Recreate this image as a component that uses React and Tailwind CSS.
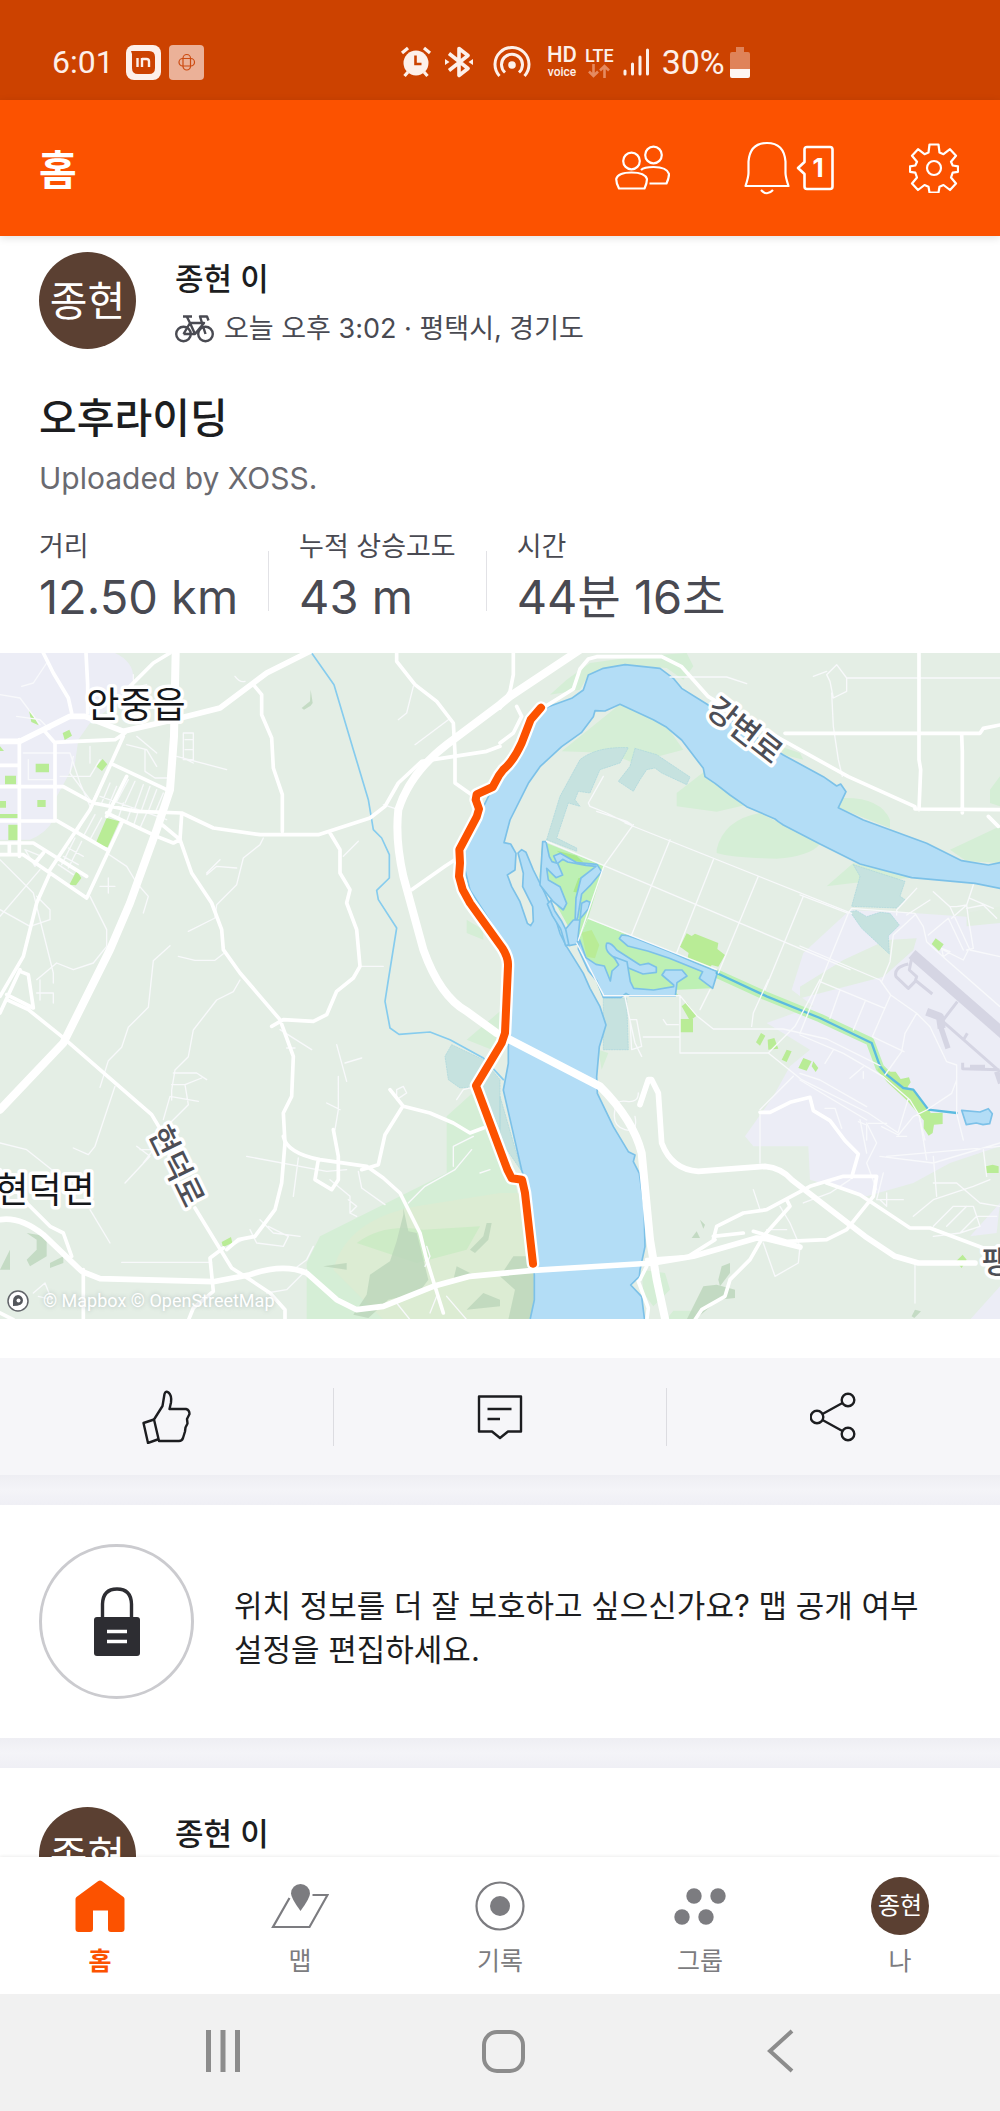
// ============================================================
// Feed — pantalla de inicio con actividad, mapa y navegación
// ============================================================

const FONT = 'font-[Inter,"Noto_Sans_CJK_KR",sans-serif]';

/* ---------- Barra de estado ---------- */

function StatusBar() {
  return (
    <div className="flex h-[100px] shrink-0 items-center bg-[#cc4200] pt-[24px] font-[Roboto,sans-serif] text-[#fdf0ea]">
      <div className="flex w-2/5 items-center pl-[52px]">
        <span className="text-[32px] leading-[36px]">6:01</span>
        <svg className="ml-[12px] size-[35px]" viewBox="0 0 35 35" fill="none" aria-hidden="true">
          <rect width="35" height="35" rx="8" fill="#fdf0ea" />
          <path d="M5 6h18q6 0 6 6v11q0 6-6 6H12q-6 0-6-6V9z" fill="#cc4200" />
          <path d="M11.500 13v9M16 22v-9M16 14h4.500q2.500 0 2.500 2.500V22" stroke="#fdf0ea" strokeWidth="2.400" />
        </svg>
        <svg className="ml-[8px] size-[35px]" viewBox="0 0 35 35" fill="none" aria-hidden="true">
          <rect width="35" height="35" rx="4" fill="#ebb198" />
          <rect x="14" y="9.500" width="7.500" height="15.500" rx="3.700" stroke="#cc4a10" strokeWidth="1.200" />
          <rect x="10" y="13.500" width="15.500" height="7.500" rx="3.700" stroke="#cc4a10" strokeWidth="1.200" />
        </svg>
      </div>
      <div className="flex items-center">
        {/* Alarma */}
        <svg className="h-[32px] w-[32px]" viewBox="0 0 32 32" aria-hidden="true">
          <circle cx="16" cy="17" r="12.500" fill="currentColor" />
          <path d="M2 7l6-5M30 7l-6-5M8 26l-3.500 4M24 26l3.500 4" stroke="currentColor" strokeWidth="3.200" />
          <path d="M15.500 9.500v8.500h6" stroke="#cc4200" strokeWidth="2.600" fill="none" />
        </svg>
        {/* Bluetooth */}
        <svg className="ml-[13px] h-[32px] w-[28px]" viewBox="0 0 28 32" fill="none" stroke="currentColor" strokeWidth="3.600" aria-hidden="true">
          <path d="M4 7.500L23 22.500 14 29.500V2.500L23 9.500 4 24.500" strokeLinejoin="round" />
          <path d="M0 13l4.500 3L0 19zM28 13l-4.500 3 4.500 3z" fill="currentColor" stroke="none" />
        </svg>
        {/* Zona wifi */}
        <svg className="ml-[20px] h-[32px] w-[38px]" viewBox="0 0 38 32" fill="none" stroke="currentColor" strokeWidth="3" aria-hidden="true">
          <path d="M6.500 30A17 17 0 1 1 31.500 30" />
          <path d="M12 26.500A10.500 10.500 0 1 1 26 26.500" />
          <circle cx="19" cy="19" r="3.800" fill="currentColor" stroke="none" />
        </svg>
        <span className="ml-[16px] flex flex-col items-center">
          <span className="text-[22px] leading-[20px] font-medium">HD</span>
          <span className="text-[12px] leading-[14px] font-medium">voice</span>
        </span>
        <span className="ml-[8px] flex flex-col items-center">
          <span className="text-[18px] leading-[17px] font-medium">LTE</span>
          <svg className="h-[14px] w-[22px]" viewBox="0 0 22 14" fill="none" stroke="#e58a60" strokeWidth="2.600" aria-hidden="true">
            <path d="M5.500 0v12M1 7.500l4.500 4.500L10 7.500M16.500 14V2M12 6.500L16.500 2 21 6.500" />
          </svg>
        </span>
        <svg className="ml-[9px] h-[28px] w-[27px]" viewBox="0 0 27 28" stroke="currentColor" strokeWidth="3" strokeLinecap="round" aria-hidden="true">
          <path d="M2 23v3M9.500 16v10M17 9v17M24.500 2v24" />
        </svg>
        <span className="ml-[12px] text-[34px] leading-[36px]">30%</span>
        <svg className="ml-[5px] h-[31px] w-[20px]" viewBox="0 0 20 31" aria-hidden="true">
          <path d="M6 0h8v5h4q2 0 2 2v15H0V7q0-2 2-2h4z" fill="#df8359" />
          <path d="M0 22h20v7q0 2-2 2H2q-2 0-2-2z" fill="#fdf6f2" />
        </svg>
      </div>
    </div>
  );
}

/* ---------- Cabecera ---------- */

function Header() {
  return (
    <header className="relative z-10 flex h-[136px] shrink-0 items-center bg-[#fc5200] pr-[41px] pl-[39px] text-white shadow-[0_2px_8px_rgba(0,0,0,0.12)]">
      <h1 className="pt-[3px] text-[41px] leading-[48px] font-bold">홈</h1>
      <button type="button" aria-label="친구" className="ml-auto">
        <svg className="h-[52px] w-[55px]" viewBox="0 0 55 52" fill="none" stroke="currentColor" strokeWidth="2.200" strokeLinejoin="round">
          <circle cx="16.500" cy="19" r="8.300" />
          <circle cx="38.500" cy="13" r="8.300" />
          <path d="M4 46.500Q1.200 41 1.200 37 3 30.500 16.500 30.500T32 37q0 4-2.500 9.500z" />
          <path d="M26 28q3-3 12.500-3Q52 25 54 32q0 4-2.500 9.500H34.500" />
        </svg>
      </button>
      <button type="button" aria-label="알림 1" className="ml-[74px] flex items-center gap-[6px]">
        <svg className="h-[54px] w-[46px]" viewBox="0 0 46 54" fill="none" stroke="currentColor" strokeWidth="2.200" strokeLinejoin="round">
          <path d="M4.500 20.500Q6 2 23 2t18.500 18.500V32q0 4 3 13H1.500q3-9 3-13z" />
          <path d="M17 49q6 6.500 12 0" />
        </svg>
        <span className="relative flex h-[46px] w-[38px] items-center justify-center pl-[6px]">
          <svg className="absolute inset-0 size-full" viewBox="0 0 38 46" fill="none" stroke="currentColor" strokeWidth="2.600" strokeLinejoin="round" aria-hidden="true">
            <path d="M11 2h23q2.500 0 2.500 2.500v37q0 2.500-2.500 2.500H11q-2.500 0-2.500-2.500V29L2 23l6.500-6V4.500Q8.500 2 11 2z" />
          </svg>
          <span className="relative text-[26px] leading-[32px] font-bold">1</span>
        </span>
      </button>
      <button type="button" aria-label="설정" className="ml-[75px]">
        <svg className="size-[50px]" viewBox="0 0 50 50" fill="none" stroke="currentColor" strokeWidth="2.200" strokeLinejoin="round">
          <path d="M20.500 1.500h9l1 8 4 1.700 6.500-5 6 6.500-5 6 1.700 3.800 5.300.8v5.500l-5.300.9-1.700 4.800 5 6-6 6.500-6.500-5-4 1.700-1 5.800h-9l-1-5.800-4-1.700-6.500 5-6-6.500 5-6-1.700-4.800-5.300-.9v-5.500l5.300-.8L8 18.700l-5-6 6-6.500 6.500 5 4-1.700z" />
          <circle cx="25" cy="25" r="7" />
        </svg>
      </button>
    </header>
  );
}

/* ---------- Mapa de la ruta ---------- */

const RIVER =
  'M1645 161L1715 136 1750 111 1765 66 1810 46 1875 35 1980 46 2020 76 2045 106 2120 153 2350 306 2470 371 2510 399 2522 393 2538 416 2515 464 2590 501 2780 571 2885 623 2965 636 3020 625V710L2925 691 2735 674 2580 633 2460 573 2350 516 2335 506 2325 498 2240 461 2190 426 2145 391 2115 371 2110 346 2045 261 2000 223 1960 200 1860 154 1815 174 1785 173 1780 191 1745 238 1685 281 1620 341 1585 391 1530 501 1512 569 1532 573 1548 601 1545 651 1522 666 1535 701 1560 746 1582 811 1592 818 1600 805 1598 761 1568 701 1570 661 1554 600 1565 590 1578 598 1600 651 1635 721 1665 791 1680 841 1700 881 1750 961 1770 1006 1800 1061 1818 1116 1798 1181 1790 1271 1792 1321 1840 1421 1885 1496 1905 1506 1900 1526 1918 1561 1932 1661 1935 1781 1920 1851 1918 1871 1892 1896 1925 1931 1935 2010H1588L1603 1941 1603 1866 1575 1581 1565 1551 1510 1311 1525 1231V1161L1530 981 1520 911 1500 851 1410 711 1385 611 1440 481 1460 441 1500 361 1545 291 1600 201z';

const ROUTE =
  'M1623 164L1592 200 1565 270Q1540 325 1510 350L1497 367 1478 402 1430 424 1427 440 1437 468 1430 492 1378 590 1380 630 1377 670 1388 710 1410 750 1507 885Q1526 915 1524 940L1515 1140 1505 1170 1428 1298 1522 1550 1535 1576 1566 1580 1575 1620 1592 1770 1599 1832';

function RouteMap() {
  return (
    <div className="relative">
      <svg className="block w-full" viewBox="0 0 1000 666" aria-label="오후라이딩 지도">
        <rect width="1000" height="666" fill="#e4eee5" />
        <g transform="scale(0.33333)" fill="none" strokeLinejoin="round" strokeLinecap="round">
          {/* Zonas urbanas */}
          <g fill="#ecedf6">
            <path d="M0 0H345Q400 25 400 75 385 130 330 165L270 210 235 260 225 330 165 440 160 500Q140 540 90 560H0z" />
            <path d="M2550 771L2750 781 2900 791 3000 765V1480L2850 1530 2740 1590 2600 1630 2430 1580 2425 1480H2260L2235 1450 2320 1330 2370 1240 2430 1190 2300 1110 2440 1060 2375 1010 2410 900z" />
            <path d="M3000 1650L2910 1750 2990 1740zM3000 1900L2910 2000h90z" />
          </g>
          {/* Vegetación */}
          <g fill="#d5eed6">
            <path d="M1650 125L1700 80 1770 30 1900 12 1985 5 2060 0 2080 40 2050 80 2000 45 1870 35 1765 66 1740 110z" />
            <path d="M1685 295L1860 154 2000 220 2050 290 1900 330 1830 300z" />
            <path d="M2030 420L2120 350 2240 455 2150 476 2030 460z" />
            <path d="M2150 590Q2170 500 2280 480L2460 573Q2430 610 2330 617 2200 615 2150 600z" />
            <path d="M2480 700L2560 630 2735 674 2560 690zM2520 435Q2640 430 2670 500V525L2515 464zM2340 280l60 20 10 20-60-15zM2850 590L3000 520V630L2900 625zM3000 370l-30 40v40l30 10z" />
            <path d="M1400 800l50 30v30l-50-20zM1500 1075L1400 1160 1500 1200zM1340 1390L1440 1300 1540 1560 1600 1850V2000H920V1830L960 1750 1340 1560V1480z" />
            <path d="M1925 1850l70 10 15 50-50 50-30-40zM2000 1998l20-25h60l15 25zM1795 1190l30 10-20 50z" />
          </g>
          <path d="M2400 1001L2530 921 2660 861 2750 856 2740 891 2650 971 2460 1021 2400 1036zM2900 780l100-20v50l-100 10z" fill="#e2eee2" />
          <path d="M1000 1850Q1040 1700 1250 1660L1500 1620 1570 1620 1600 1850 1590 2000H1150z" fill="#dcecd3" />
          <path d="M1070 1770Q1150 1710 1270 1730L1440 1720 1400 1790 1250 1830z" fill="#cdebc6" />

          {/* Relieve */}
          <g fill="#bcd6bb" opacity="0.8">
            <path d="M80 1740l60 10v60l-50 30-10-20 30-30v-30zM150 1830l40-20v20l-40 15zM0 1850l30-60v60z" />
            <path d="M1210 1665l15 70 25 5 15 60 20 80-30 40-90 20-60 55-45-10 40-60 10-60 60-40 20-60 20-80z" />
            <path d="M970 1840l70-10v20zM1370 1840l60 30-70 10zM1460 1710h15l-10 50-40 40-15-10 40-40zM1400 1970l50-50 50 20v20z" />
            <path d="M1540 1810h40l45 60v90l-40 40h-60l20-90-45-40z" />
            <path d="M2165 1840l25-10v30l-30 40-5-20zM2110 1900l40-5 55 15v25l-50 5-70 60h-25zM2075 1755l15-20 10 20zM2100 1700l15 15-5 12zM2735 1990l10-20 18 5-20 20zM905 165l25-20 2-35 6 40-6 8-20 12z" />
          </g>

          {/* Humedales */}
          <g fill="#c6e2df" stroke="#a9d6dc" strokeWidth="2" strokeDasharray="4 4">
            <path d="M1640 560L1680 430 1740 320Q1790 280 1885 284L1860 330 1800 350 1770 420 1735 415 1725 440 1740 460 1705 450 1670 555 1730 585 1730 595z" />
            <path d="M1905 286L1970 305 2070 372 2060 395 1985 360 1965 345 1940 350 1920 380 1900 415 1855 385 1890 340z" />
            <path d="M2560 635L2715 685 2700 730 2715 740 2690 765 2555 760 2580 670zM2550 776L2570 773 2600 791 2640 778 2670 781 2698 816 2665 849 2668 903 2585 826z" />
            <path d="M1355 1175L1450 1220 1500 1280V1430L1440 1300 1380 1305 1345 1280 1335 1210zM1500 1330l65 225-65-95z" />
            <path d="M1810 1035h70l5 155h-75z" />
          </g>

          {/* Canal */}
          <path d="M2150 962L2300 1030 2460 1095 2610 1165 2640 1245 2770 1370" stroke="#bdf0b4" strokeWidth="26" />

          <path d={RIVER} fill="#b3ddf6" stroke="#7cc1e8" strokeWidth="5" />

          {/* Parque de la laguna */}
          <g transform="translate(1590 531)">
            <path d="M40 35L222 108 175 262 140 335 60 190 28 140z" fill="#bdf0b4" />
            <path d="M80 62l60 15 20 20-40-5zM165 140l-15 50-20-5 15-40zM35 50l5 80-8 0z" fill="#a9e98c" />
            <path d="M175 265L300 318 565 425 545 475 430 480 445 495H215L145 330z" fill="#bdf0b4" />
            <path d="M155 308L185 300 208 345 195 385 170 380z" fill="#b9ec96" />
            <path d="M450 350l20-40 15 8 10-7 70 28-3 18 23 18-20 35-20-5-5 10-68-28 4-18z" fill="#b9ec96" />
            <g fill="#b3ddf6" stroke="#7cc1e8" strokeWidth="5">
              <path d="M38 35h10l10 45 8 15 15 5-10-22 20-8 50 28 60 5 14 22-35 42-25 25-12 70-8 20-10 60-18 5-15-50-25-40-15-35 10-10 12 30 20 30 20 40 20-8 4-100 15-60 45-35-30-3-55-10-15-8-15 12 15 35-20 8-28-28 5 35 35 20 20 50-10 20-30-25-40-50z" />
              <path d="M130 270h20l5-50 15-8 10 5-5 20-25 30-8 75-25 5-10-50zM275 315l20 2 28 10 100 40 70 30 70 28-15 50-40-30 10-20-100-40-65-22-60-15-25-22z" />
              <path d="M230 340q12-5 30 20l70 45 25-5 24 12v15l-40 5-60-25-40-35q-15-15-9-32z" />
              <path d="M148 328l20 55 30 20 25 5 18 45 5-30 20-18-15-25 40 15 10 60 10 20 60 5 60-10v-5l-35-30 10-15h50l15 18-30 20-5 40H300l-12-8-15 12h-53l-20-50-25-30-30-65z" />
            </g>
            <path d="M100 108l15 22" stroke="#bdf0b4" strokeWidth="8" />
          </g>

          {/* Parques pequeños */}
          <g fill="#b9ec96">
            <path d="M86 167q18 25 30 50l-22-10zM188 240l20-10 8 18-22 13zM107 332h40v26h-40zM15 368h33v26H15zM112 441h25v21h-25zM0 444h18v20H0zM0 483h55v12H0zM25 515h30v46H25zM288 340l20-22 14 16-16 20zM320 495l38 10-35 78-38-8zM208 695l22-42 14 22-16 22zM0 280l12 14H0zM665 1767l28-15 4 18-28 12z" />
            <path d="M2045 1060l15-12 30 40-20 15zM2041 1098h38v40h-38zM2268 1168l15-28 13 8-16 30zM2303 1160l20-5 12 32-30 3zM2345 1220l15-30 15 5-15 32zM2395 1245l15-30 25 10-15 28zM2435 1240l5-15 15 20-8 12zM2958 1540l20-5 18 5v20h-38zM2868 1825l20-20 12 15-15 25z" />
            <g transform="translate(2400 681)">
              <path d="M395 192l12-17 24 18-14 20zM232 570l10-15 25 20 20 0 15 22 25-5 5 15-10 15 20 10 50 65-20 25-50-60-60-55zM372 700l56-2v34l-26 2-4 25-12 8-15-22z" />
            </g>
          </g>

          {/* Agua menor */}
          <path d="M2150 960L2300 1030 2460 1095 2615 1170 2640 1240 2660 1265 2710 1305 2740 1310 2785 1370 2870 1380" stroke="#5bbbe0" strokeWidth="7" />
          <path d="M2885 1372l55 5 25-10 12 15-8 30-20 3-20-5-30 5z" fill="#b3ddf6" stroke="#7cc1e8" strokeWidth="5" />
          <path d="M935 0L1002 95 1060 290 1105 440 1120 530 1145 555 1168 605V675L1130 712 1135 740 1190 825 1165 981 1155 1045 1170 1125 1197 1144 1290 1137 1350 1160 1450 1215 1510 1280" stroke="#86ccee" strokeWidth="5" />

          {/* Aeropuerto */}
          <g transform="translate(2400 681)" stroke="#d5d5e3" strokeLinecap="butt">
            <path d="M336 222L620 470" strokeWidth="32" />
            <path d="M325 252Q280 262 288 290L325 325 345 305 350 290 328 270 335 235M345 300l52 42M472 365l-50 65M412 410L600 575M490 480l12-20M488 548v18l110 3" strokeWidth="9" />
            <path d="M380 395l40 15 5 35" strokeWidth="24" />
            <path d="M422 440l22 65M510 562h45M590 575l12 35" strokeWidth="16" />
          </g>

          {/* Calles menores */}
          <g stroke="#f8f9fb" strokeWidth="4">
            <path d="M65 100l35-10 40-60M0 125l60 10 60 80M50 190l70 10 30 30M70 300h140l30 90 30 70M85 320v60h80M180 370h90l30-50M220 310l-10 50 60 80M270 280v50M380 110l60-15M400 65v40M380 275l60 15 30 50M410 250l60 50M435 290v65l30 20h40M530 310l150 40M550 240h30v80h-30zM555 260h22M555 290h22M560 320l20 10M705 70q15 20 30 15M1240 100l-20 80-25 20M1345 200l-100 75M1150 455l45 15" />
            <path d="M310 380l-30 60M330 390l-25 60M350 400l-25 60M385 380l-35 65M405 385l-30 65M430 395l-25 70M450 400l-25 70M470 410l-25 65M490 420l-25 60M300 430l200 70M345 440l-15 45M370 450l-15 45M395 465l-15 40M415 475l-15 45M440 480l-20 45M265 475l-35 65M285 485l-35 65M305 495l-35 65M225 555l-40 80M245 565l-40 80M175 635l45 30M190 610l45 25M205 585l45 25" />
            <path d="M75 590l50 20-20 30zM120 650L0 790M0 620l100 100 60 240v30M110 730l40 40v30l-60 20-90-50M320 600l60 40 30 50 35 40-15 50M270 730l50 100v50L280 930l-60 20-50-20-60 50M300 700l45 0M325 675v45M790 555l-10 20-50 40-20 80-60 60-5 40-80 40M710 645l-60-5-30 25M660 620l-40 40M535 910l50 12h60l25-20M510 878l-50 45-15 140-60 60-20 60-40 40-25 80M1030 610l45-45M1080 940h70" />
            <path d="M2010 72h170l60 20M2480 65l30-30 30 40v40l-40 20-10-50zM2440 70l40-15M2495 120l5 100 15 100 12 50M2540 75H3000M1810 370l-45 80 5 10 50 20 80 40M1790 475l90 30 15 10M1640 565L1812 638 2550 950M1875 510L2555 781M1900 515L1812 638 1735 862M2010 560L1895 845M2140 620L2030 900M2275 670L2155 960M2410 730L2295 1010M1765 796L2150 950M1730 870l80 155" />
            <path d="M1810 1028h230l50 60 50 40h210l130 30 160 80M2040 1030v170h265l100 80 200 100 90 60M2305 1200l80-80 75-140M2255 1120l5-40 45-100M2100 1070l30-60M1875 1030l10 50 20 90 20 40M1890 1100h20l15 80-30 10zM1930 1152h110M1990 1100l10 15h35M2380 1270l-100 100M2280 1380v150" />
            {/* Barrio del aeropuerto */}
            <g transform="translate(2400 681)">
              <path d="M0 45L145 100 90 235 0 460M145 100l10-15 190 15 25 40 10 45 60 55 160 140M290 105v-15l60-65M320 105l70-45M345 105l-65 60-10 80-25 60M400 35l50 45 60 130 90 20M450 80l20 0 30-5 20-60M455 115l45-40 5 40 15 90-20 5M385 165l60-50 45 95M430 210l60 30 15-30M510 55l70 30M500 85l50-10 40 40M425 205l25 10-20 15z" />
              <path d="M0 198L240 300 272 345 350 400 390 440 440 545 470 555V700l20 80M60 305l195 80M120 330l-30 85M195 365l-35 85M272 345l-55 125 95 45M350 400l-35 60-10 55-50 70M100 510l-25 40M190 560l-40 35M190 575v20M0 465L130 520 250 590 330 660 360 710M325 655l-30 100M470 600l-15 40-75 50-40 20-45 55-50-25M0 580l60 20 140 80M0 600l100 60 100 60M75 685l30 0 20 60M175 725l25 10v45M205 730h55M355 700l20 80" />
            </g>
            <path d="M2660 1510l340-30M2690 1450h30M2600 1410l30 60-30 60 30 80M2580 1400l20 100M2640 1510l160 20 200-60M2800 1510l10 120M2950 1490l10 80M2760 1400l20 120M2800 1590h70l70 60 60 10M2650 1560l-20 80h80M2740 1690l60-50 120-40 50-20M2800 1720l60-60 60 0 20 60-60 20-80 10M2840 1720l60-60M2880 1740l50-50h60M2745 1830v120M2290 1770l35 100 70-40 5-50-30-70-30-50M2300 1730h60M2260 1610l20 60M2410 1650l80-30 60-40M2640 1640l20 20v-40" />
            <path d="M720 981l-20 35-50 25-70 90-15 80-40 40-10 60 0 30M520 1260h70l30 20M515 1295h40l10 60-90 90M555 1295l50-20M510 1330l85 15M490 1400l20-70M345 1300l-20 60-40 120-20 25-45-20M0 1470l80 20 100 80M410 1480l40 30-75 80M420 1490h40l-30 40M840 1130l95 60M860 1185h25M1010 1175l30 110M1035 1230l50-15M1015 1270v100l-10 60M980 1350l40 20M740 1510l240 45 60-5M895 1515l-15 115M990 1580l60 50 0 50 20 10M1045 1640l25 20-20 20M1075 1555l10 50 70 50M365 1828h270M270 1670l60 100M780 1700l40 40 80 10M750 1730l20 40 80 10 15-30-60-30M700 1775l40-20M940 1780l-20 40-40 30M800 1920l60-10 60-60M100 1920l35-30 20 50-40-10M1225 1650l50-50 90-50 50-60M1360 1540v-60l60-30M1220 1320l-30 20v-30l20-10zM1370 1340l20-30 40-10M1190 1950l40 50M1310 1930l-20 50M1340 1930l60 70M1280 1780l10 30-15 30M1440 1560l30-10" />
            <path d="M1845 1370q0-30 35-25t35-25M1845 1370q-10 50 30 60t30-40M110 1020h50v30M120 981v60" />
          </g>

          {/* Calles principales */}
          <g stroke="#ffffff" strokeWidth="11">
            <path d="M130 0l30 60 45 75 10 45M258 0l5 95v85M510 0l-50 30-80 80M0 337h55M0 401h190L280 450 410 475 545 480 640 525 780 545H955L1110 495 1155 460 1195 390 1265 325 1460 295 1500 280M0 504h165M0 570h100l160 100M58 260v350M130 230l35 40v230L320 590M165 268l180-8 30-20M370 250L270 470 150 650M340 335L500 410M380 370l-60 120M365 510l-105 225M320 480l150 70 50 20 20-10 5-75M0 605h70L260 735M28 570v30M130 600l-25 30M480 510l60 50 35 100 60 90 30 80 5 60 50 70 60 70 60 70 40 110-5 120-25 50 5 90-10 120-20 80-60 80-50 10-35 30M760 95l25 30v60l30 70 5 90 27 80v110M990 540l30 50v70l30 50-10 40 30 80 10 110-20 35-50 40-30 70-40 20-90-5-35 20" />
            <path d="M150 660l-40 90-40 160-70 120M60 950L0 1080M60 955l25 10 15 100-80-40M20 1040l65 30 100 80 270 235 30 50M1190 0v25l55 70 65 50 50 65 5 90v90l50 35M1235 710l100-70 30-20M585 1665l110 180 55 35 60 40 45 50v30M850 1450Q860 1500 960 1520L1100 1540 1150 1575 1200 1620 1260 1740 1280 1820 1330 1980M1170 1310l40 50 80 20 70 30 50 30 40-15M1205 1365l-50 80-20 90-50 15M1000 1430l15 80v70l-20 30-50-30 10-60M0 1550l80 100 70 70 40 20 25 70M670 1785l-40 30 10 100-60 50-20 50M250 1850v150M0 1980l40 20" />
            <path d="M1500 270l40-30 25-50-15-30M1500 165l30-50 10-50V0M1640 158l80-50 20-60 25-30 25-7 195 0 60 30 80 90 150 90 270 150 200 90 0 7 270 2M2355 241h585l10-15 50-10M2757 0v320l5 30-5 120M2885 245l2 50v185M2965 490l30 30" />
            <path d="M2280 1378h30l60-30 60-15 10 40 50 30 45 60 40 40-20 70M2140 1760l10-40 80-40 70-10 130-70 100-30h100l-10 60-80 100-60 30-120 5-100-30M2065 1810l80-50M2070 1810l-130 10M2140 1750l90-10M2360 1640l10 20-80 90-40 70-60 60-15 50-70 40-20 30M2480 1590l100 35 150 100h60l160 60M1920 1880l20-40M1915 1885l30 80-5 40" />
          </g>
          <g stroke="#ffffff" strokeWidth="17">
            <path d="M0 265h60l150-75 45 0 115 45 150-35 140-35 140-105L930 -5M0 1700Q60 1690 130 1745L245 1855 300 1877 640 1886 750 1865Q850 1830 920 1860L1010 1940 1070 1970 1150 1960 1300 1900 1410 1870 1600 1852 1960 1830 2080 1810 2270 1755 2300 1757 2400 1782" />
            <path d="M1920 1355l25-75 10 0 20 40 10 150q30 80 110 85l200-15q50 5 80 40l220 170 90 60 70 20h170" />
          </g>
          <g stroke="#ffffff" strokeWidth="24">
            <path d="M527 0l-5 250-12 160-40 120L390 750 330 890 190 1170 0 1370" />
            <path d="M1740 -10L1530 130 1500 155 1340 275Q1230 360 1195 470 1185 560 1210 670L1270 890Q1320 1030 1400 1075L1490 1140 1800 1300Q1900 1400 1925 1500L1950 1760 1970 1880 1998 2010" />
          </g>

          {/* Recorrido */}
          <path d={ROUTE} stroke="#ffffff" strokeWidth="38" />
          <path d={ROUTE} stroke="#fc5200" strokeWidth="24" />
        </g>

        {/* Topónimos */}
        <g className={FONT} stroke="#ffffff" strokeWidth="7" strokeLinejoin="round" paintOrder="stroke" dominantBaseline="central" textAnchor="middle">
          <g fill="#15171a" fontSize="36">
            <text x="136" y="52">안중읍</text>
            <text x="45" y="537">현덕면</text>
          </g>
          <g fill="#4d4e56" fontSize="31" fontWeight="500">
            <text transform="translate(745 77) rotate(38)">강변로</text>
            <text transform="translate(177 513) rotate(64)">현덕로</text>
            <text x="996" y="608">팽</text>
          </g>
        </g>
      </svg>
      <div className="absolute bottom-0 left-0 flex h-[36px] items-center gap-[14px] pl-[7px]">
        <svg className="size-[22px]" viewBox="0 0 22 22" aria-hidden="true">
          <circle cx="11" cy="11" r="10" fill="#fff" stroke="#62656a" strokeWidth="1.500" />
          <path d="M6 16q-1-11 5-11a5.500 5.500 0 0 1 5 5.500Q16 16 6 16z" fill="#53565b" />
          <circle cx="11.500" cy="10.500" r="2" fill="#fff" />
        </svg>
        <span className="font-[Roboto,sans-serif] text-[18px] leading-[24px] text-white [text-shadow:0_0_4px_rgba(90,110,120,0.4)]">
          © Mapbox © OpenStreetMap
        </span>
      </div>
    </div>
  );
}

/* ---------- Piezas del feed ---------- */

function Separator() {
  return <div className="h-[30px] bg-linear-to-b from-[#eeeef3] via-[#f4f4f8] to-[#efeff5]" />;
}

function AthleteRow({ meta }) {
  return (
    <div className="flex gap-[39px] px-[39px]">
      <div className="flex size-[97px] shrink-0 items-center justify-center rounded-full bg-[#5b4032] text-[41px] leading-[48px] text-white">
        종현
      </div>
      <div className="pt-[7px]">
        <div className="text-[31px] leading-[40px] font-medium text-[#1c1d20]">종현 이</div>
        {meta && (
          <div className="mt-[10px] flex items-center gap-[10px] text-[27px] leading-[40px] text-[#494a52]">
            <svg className="h-[28px] w-[39px]" viewBox="0 0 39 28" fill="none" stroke="currentColor" strokeWidth="2.400" strokeLinejoin="round" aria-hidden="true">
              <circle cx="8.500" cy="19" r="7.300" />
              <circle cx="30.500" cy="19" r="7.300" />
              <path d="M8.500 19L15 8l5 11h-11.500M20 19l9-11H15L12 2M8 1.500h9M30.500 19L25 1.500h7l1.500 4" />
            </svg>
            {meta}
          </div>
        )}
      </div>
    </div>
  );
}

const stats = [
  { label: '거리', value: '12.50 km' },
  { label: '누적 상승고도', value: '43 m' },
  { label: '시간', value: '44분 16초' },
];

function Stats() {
  return (
    <dl className="mt-[29px] flex items-center px-[39px] text-[#494a52]">
      {stats.map((s, i) => (
        <div key={s.label} className="flex items-center">
          {i > 0 && <span className="mx-[30px] mt-[8px] h-[60px] w-px bg-[#e2e2e6]" />}
          <div>
            <dt className="text-[27px] leading-[40px]">{s.label}</dt>
            <dd className="text-[47px] leading-[60px]">{s.value}</dd>
          </div>
        </div>
      ))}
    </dl>
  );
}

function Actions() {
  return (
    <div className="mt-[39px] flex h-[117px] items-center divide-x divide-[#dcdce1] bg-[#f6f6f9] text-[#1c1d20]">
      <button type="button" aria-label="좋아요" className="flex h-[58px] flex-1 items-center justify-center">
        <svg className="h-[54px] w-[50px]" viewBox="0 0 50 54" fill="none" stroke="currentColor" strokeWidth="2.400" strokeLinejoin="round">
          <path d="M13 29.500L21.500 16 23.500 4q1-3.500 4-1.500 3.500 3 2.500 10l-1.500 6.500H45q3.500 1 3.500 5l-2.500 5 .5 4.500-2 4-.5 4-2 6.500q-1 3-4 3H18z" />
          <path d="M13 29.500L2.500 33 7 53l11-4" />
        </svg>
      </button>
      <button type="button" aria-label="댓글" className="flex h-[58px] flex-1 items-center justify-center">
        <svg className="h-[46px] w-[46px]" viewBox="0 0 46 46" fill="none" stroke="currentColor" strokeWidth="2.400" strokeLinejoin="round">
          <path d="M2 2.500h42v35H31L23 44l-8-6.500H2z" />
          <path d="M10.500 15h24M10.500 25H23" strokeWidth="2.600" />
        </svg>
      </button>
      <button type="button" aria-label="공유" className="flex h-[58px] flex-1 items-center justify-center">
        <svg className="h-[50px] w-[48px]" viewBox="2 0 48 50" fill="none" stroke="currentColor" strokeWidth="2.400">
          <circle cx="9" cy="25" r="6.300" />
          <circle cx="40" cy="8" r="6.300" />
          <circle cx="40" cy="42" r="6.300" />
          <path d="M14.500 22L34.400 11M14.500 28L34.400 39" />
        </svg>
      </button>
    </div>
  );
}

function PrivacyCard() {
  return (
    <section className="flex items-center gap-[40px] px-[39px] py-[39px]">
      <div className="flex size-[155px] shrink-0 items-center justify-center rounded-full border-[3px] border-[#cbcbcf]">
        <svg className="h-[70px] w-[46px]" viewBox="0 0 46 70" fill="none" aria-hidden="true">
          <path d="M8.500 32V17Q9 2 23 2t14.500 15v15" stroke="#2d2d32" strokeWidth="3.400" />
          <rect y="30" width="46" height="39" rx="3" fill="#2d2d32" />
          <path d="M13 44.500h20M13 54.500h20" stroke="#fff" strokeWidth="3.600" />
        </svg>
      </div>
      <p className="pt-[12px] text-[31px] leading-[44px] break-keep text-[#1c1d20]">
        위치 정보를 더 잘 보호하고 싶으신가요? 맵 공개 여부 설정을 편집하세요.
      </p>
    </section>
  );
}

/* ---------- Navegación inferior ---------- */

const tabs = [
  {
    label: '홈',
    active: true,
    icon: (
      <svg className="h-[52px] w-[50px]" viewBox="0 0 50 52" fill="currentColor" aria-hidden="true">
        <path d="M23 1.200q2-1.500 4 0L48.500 17q1 1 1 2v30q0 3-3 3H36q-3 0-3-3V30.500H18V49q0 3-3 3H3.500q-3 0-3-3V19q0-1 1-2z" />
      </svg>
    ),
  },
  {
    label: '맵',
    icon: (
      <svg className="h-[46px] w-[58px]" viewBox="0 0 58 46" fill="none" stroke="currentColor" strokeWidth="2.200" aria-hidden="true">
        <path d="M18.500 15L2 44H38.500L56.500 12H41.500" />
        <path d="M29.500 28Q20 15 20 10.500a9.500 9.500 0 0 1 19 0Q39 15 29.500 28z" fill="currentColor" stroke="none" />
      </svg>
    ),
  },
  {
    label: '기록',
    icon: (
      <svg className="size-[50px]" viewBox="0 0 50 50" fill="none" aria-hidden="true">
        <circle cx="25" cy="25" r="23.500" stroke="currentColor" strokeWidth="2.200" />
        <circle cx="25" cy="25" r="10" fill="currentColor" />
      </svg>
    ),
  },
  {
    label: '그룹',
    icon: (
      <svg className="h-[37px] w-[52px]" viewBox="0 0 52 37" fill="currentColor" aria-hidden="true">
        <circle cx="20" cy="8" r="7.700" />
        <circle cx="44" cy="8" r="7.700" />
        <circle cx="8" cy="29" r="7.700" />
        <circle cx="32" cy="29" r="7.700" />
      </svg>
    ),
  },
  {
    label: '나',
    icon: (
      <span className="flex size-[58px] items-center justify-center rounded-full bg-[#5b4032] text-[24px] leading-[32px] text-white">
        종현
      </span>
    ),
  },
];

function TabBar() {
  return (
    <nav className="relative z-10 grid h-[137px] shrink-0 grid-cols-5 bg-white pt-[20px] shadow-[0_-1px_3px_rgba(0,0,0,0.07)]">
      {tabs.map((t) => (
        <a
          key={t.label}
          href="#"
          className={`flex flex-col items-center ${t.active ? 'font-bold text-[#fc5200]' : 'text-[#7c7c80]'}`}
        >
          <span className="flex h-[58px] items-center">{t.icon}</span>
          <span className="mt-[8px] text-[25px] leading-[36px]">{t.label}</span>
        </a>
      ))}
    </nav>
  );
}

function SystemBar() {
  return (
    <div className="relative z-10 flex h-[117px] shrink-0 items-center justify-center gap-[242px] bg-[#f1f1f1] pb-[3px] text-[#8c8c8c]">
      <button type="button" aria-label="최근 앱">
        <svg className="h-[42px] w-[34px]" viewBox="0 0 34 42" fill="currentColor">
          <path d="M0 0h5v42H0zM14.500 0h5v42h-5zM29 0h5v42h-5z" />
        </svg>
      </button>
      <button type="button" aria-label="홈 화면">
        <svg className="size-[43px]" viewBox="0 0 43 43" fill="none" stroke="currentColor" strokeWidth="4">
          <rect x="2" y="2" width="39" height="39" rx="13" />
        </svg>
      </button>
      <button type="button" aria-label="뒤로">
        <svg className="h-[44px] w-[27px]" viewBox="0 0 27 44" fill="none" stroke="currentColor" strokeWidth="4">
          <path d="M25 2L3 22l22 20" />
        </svg>
      </button>
    </div>
  );
}

export default function App() {
  return (
    <div className={`flex h-screen flex-col bg-white ${FONT}`}>
      <StatusBar />
      <Header />
      <main className="min-h-0 flex-1 overflow-y-auto [scrollbar-width:none]">
        <article className="pt-[16px]">
          <AthleteRow meta="오늘 오후 3:02 · 평택시, 경기도" />
          <h2 className="mt-[41px] px-[39px] text-[41px] leading-[56px] font-medium text-[#1c1d20]">오후라이딩</h2>
          <p className="mt-[12px] px-[39px] text-[30px] leading-[40px] text-[#6a6a70]">Uploaded by XOSS.</p>
          <Stats />
          <div className="mt-[26px]">
            <RouteMap />
          </div>
          <Actions />
        </article>
        <Separator />
        <PrivacyCard />
        <Separator />
        <article className="pt-[39px] pb-[39px]">
          <AthleteRow />
        </article>
      </main>
      <TabBar />
      <SystemBar />
    </div>
  );
}
